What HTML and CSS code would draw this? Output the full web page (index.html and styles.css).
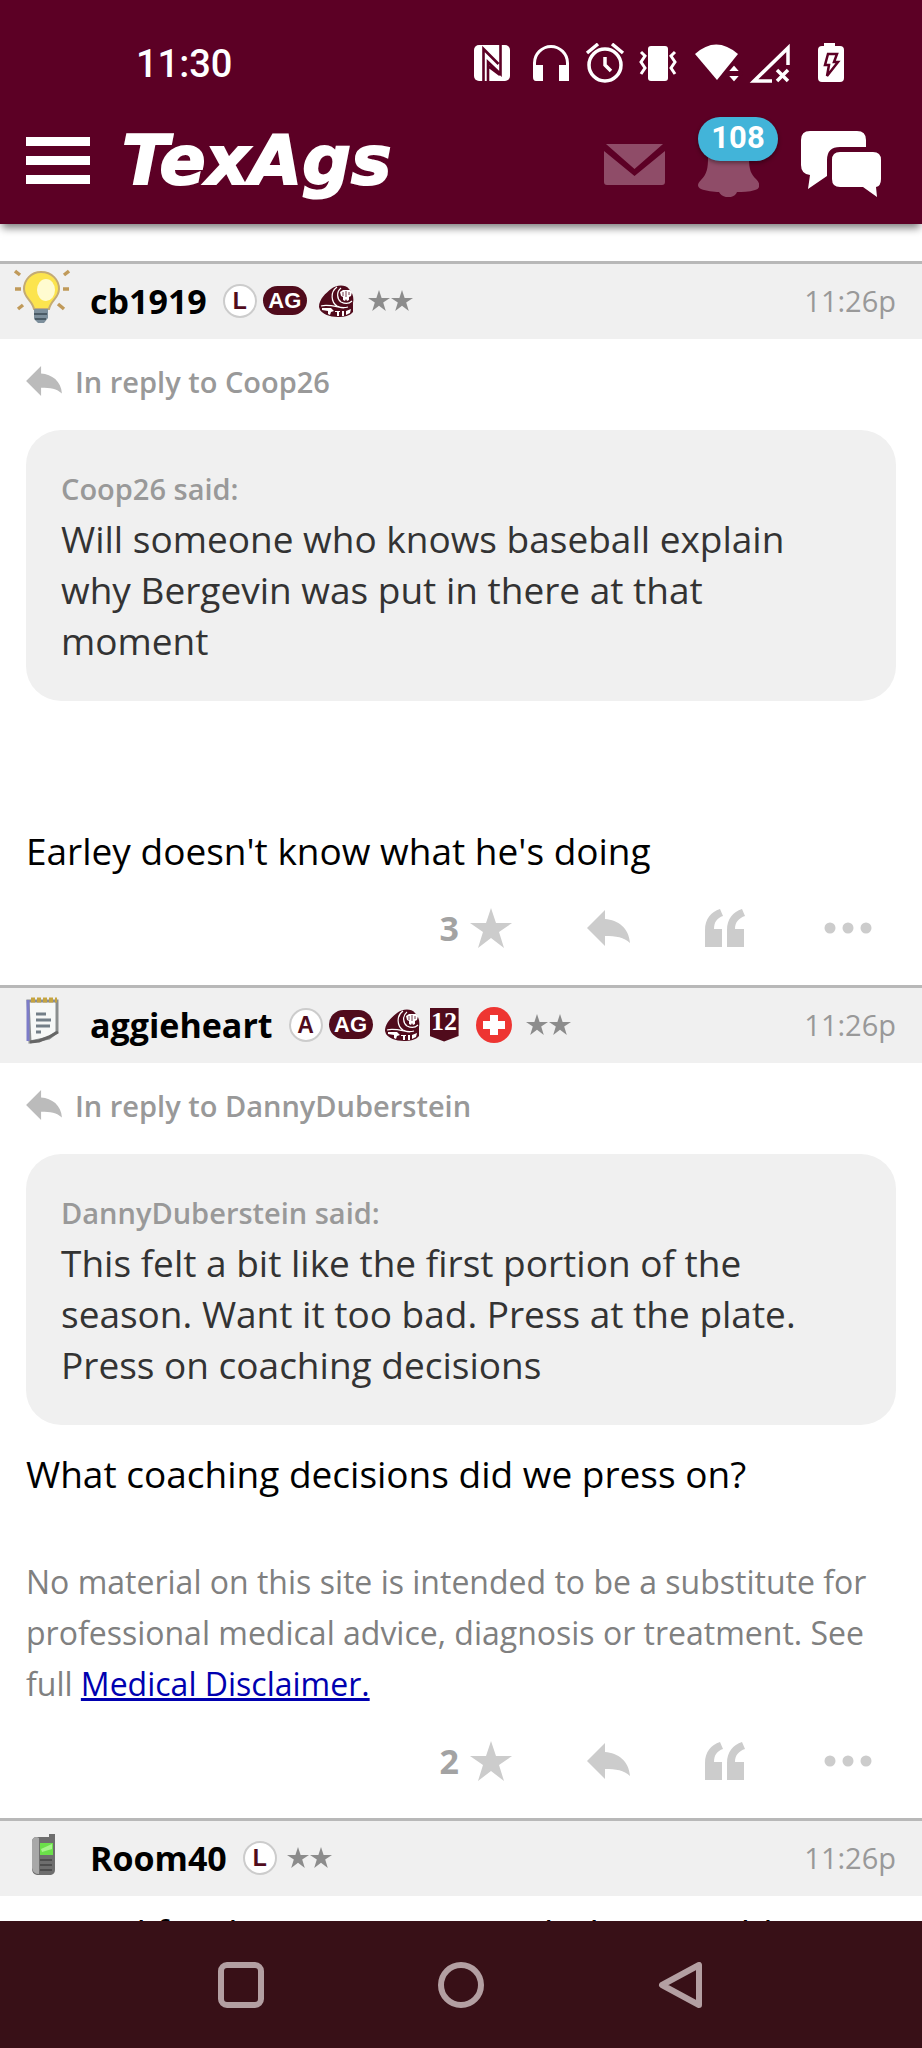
FILE: index.html
```
<!DOCTYPE html>
<html lang="en">
<head>
  <meta charset="UTF-8">
  <title>TexAgs</title>
  <meta name="viewport" content="width=device-width, initial-scale=1.0">
  <link rel="stylesheet" href="styles.css">
</head>
<body>
  <!-- shared icons -->
  <svg class="sprite" aria-hidden="true">
    <symbol id="i-reply" viewBox="0 0 43 36">
      <path d="M0 18L18 0v9c13 1 24 9 25 24-6-6-14-7-25-7v10z"/>
    </symbol>
    <symbol id="i-star" viewBox="0 0 42 40">
      <path d="M21 0l5 15h16L29 24l5 16-13-10L8 40l5-16L0 15h16z"/>
    </symbol>
    <symbol id="i-quote" viewBox="0 0 40 38">
      <path d="M0 38V21C0 10 6 3 15 0l3 7c-6 2-9 6-9 13h8v18zM22 38V21C22 10 28 3 37 0l3 7c-6 2-10 6-10 13h9v18z"/>
    </symbol>
    <symbol id="i-more" viewBox="0 0 48 12">
      <circle cx="6" cy="6" r="5.5"/><circle cx="24" cy="6" r="5.5"/><circle cx="42" cy="6" r="5.5"/>
    </symbol>
    <symbol id="i-ring" viewBox="0 0 36 32">
      <path fill="#500b1c" d="M1 22C1 14 8 8 13 4 18 0 27-1 31 4c4 4 5 9 4 14v9c-3 4-9 5-15 5-9 0-15-3-18-7z"/>
      <path fill="none" stroke="#fff" stroke-width="1.2" d="M19 2c-7 5-6 15 0 19 4 2 8 2 11 1M23 3c-5 4-4 11 0 14 4 2 8 2 11-1M3 21c6-2 12 0 23 2"/>
      <path fill="#fff" d="M22 7l3-2h7l2 2-1 4-2 1v3l-2 1-1-2-1 2-2-1v-3l-2-1zM4 23h9l3 3-3 1-1 3-2-1v-3l-6-1zM17 26h5v1h-1v4h-2v-4h-2zM24 26h2v5h-2zM28 26l5-2-1 4-4 2z"/>
      <path fill="none" stroke="#500b1c" stroke-width=".8" d="M25 7v4M28 6v6M31 7v3"/>
    </symbol>
  </svg>

  <header class="top">
    <div class="status-bar">
      <span class="clock">11:30</span>
      <svg class="status-icons" viewBox="0 0 370 40" fill="#fff">
        <!-- nfc -->
        <rect y="2" width="36" height="36" rx="5"/>
        <path fill="none" stroke="#5c0025" stroke-width="2.6" d="M9.500 38V6l15 15M26.500 2v29L14 19v19M14 23l12 9"/>
        <!-- headphones -->
        <path d="M59 34V20a18 18 0 0 1 36 0v18H85V22h7v-2a15 15 0 0 0-30 0v2h7v16h-7q-3 0-3-4z"/>
        <!-- alarm -->
        <circle cx="131" cy="22" r="16" fill="none" stroke="#fff" stroke-width="3.500"/>
        <path fill="none" stroke="#fff" stroke-width="3.500" d="M131 14v8l6 6M113 10l11-9M149 10l-11-9"/>
        <!-- vibrate -->
        <rect x="174" y="3" width="20" height="35" rx="3"/>
        <path fill="none" stroke="#fff" stroke-width="3" d="M167 9l4 4-4 6 4 6-4 6M201 9l-4 4 4 6-4 6 4 6"/>
        <!-- wifi -->
        <path d="M221 11q21-19 43 0l-21 26z"/>
        <path stroke="#5c0025" stroke-width="2" d="M253 29l7-8 7 8zM253 32h14l-7 8z"/>
        <!-- signal -->
        <path fill="none" stroke="#fff" stroke-width="3.500" d="M298 38h-18L314 5v17M303 27l11 11M314 27l-11 11"/>
        <!-- battery -->
        <path d="M350 0h11v3h5q4 0 4 4v28q0 4-4 4h-18q-4 0-4-4V7q0-4 4-4h2z"/>
        <path fill="none" stroke="#5c0025" stroke-width="2.500" d="M354 11h9l-3 8h4l-11 14 2-11h-4z"/>
      </svg>
    </div>
    <div class="site-bar">
      <button class="menu" aria-label="Menu"><span></span><span></span><span></span></button>
      <a class="logo" href="#">TexAgs</a>
      <nav class="tools">
        <a href="#" aria-label="Messages">
          <svg width="61" height="41" viewBox="0 0 61 41" fill="#8f4c68">
            <path d="M2 0h57L30.500 25zM0 7l30.500 25L61 7v31q0 3-3 3H3q-3 0-3-3z"/>
          </svg>
        </a>
        <a class="alerts" href="#" aria-label="Alerts">
          <svg width="61" height="65" viewBox="0 0 61 65" fill="#8f4c68">
            <path d="M30 4c15 0 21 9 21 22 0 12 2 16 7 21 5 5 4 10-1 11-6 2-13 2-18 2-2 7-15 7-18 0-5 0-13-1-18-3-4-2-4-5 0-9 6-6 7-12 7-22C10 13 16 4 30 4z"/>
          </svg>
          <span class="count">108</span>
        </a>
        <a class="forums" href="#" aria-label="Forums">
          <svg width="80" height="66" viewBox="0 0 80 66" fill="#fff">
            <path d="M9 0h47q9 0 9 9v7H39q-13 0-13 13v16L7 58l2-14Q0 43 0 34V9q0-9 9-9z"/>
            <path d="M39 21h33q8 0 8 8v19q0 7-5 8l1 10-14-10H39q-8 0-8-8V29q0-8 8-8z"/>
          </svg>
        </a>
      </nav>
    </div>
  </header>

  <main class="thread">
    <article class="post">
      <div class="post-head">
        <svg class="avatar" viewBox="0 0 56 56">
          <path stroke="#c09a5a" stroke-width="3.500" d="M1 2l5 4M55 2l-5 4M1 20h6M55 20h-6M4 40l5-4M50 40l-6-5" fill="none"/>
          <path fill="#fce44e" stroke="#c4ab74" stroke-width="2" d="M27 3c11 0 18 8 18 17 0 9-8 11-10 20H20c-2-9-10-11-10-20C10 11 17 3 27 3z"/>
          <ellipse cx="32" cy="21" rx="9" ry="11" fill="#fffbd0"/>
          <path fill="#7d8f9c" d="M20 40h14v9l-4 5h-6l-4-4z"/>
          <path stroke="#4b5b66" stroke-width="2" d="M20 45h13M21 50h11"/>
        </svg>
        <a class="user" href="#">cb1919</a>
        <span class="badge tier">L</span>
        <span class="badge ag">AG</span>
        <svg class="ring"><use href="#i-ring"/></svg>
        <span class="stars"><svg><use href="#i-star"/></svg><svg><use href="#i-star"/></svg></span>
        <time>11:26p</time>
      </div>
      <div class="post-body">
        <a class="reply-to" href="#"><svg><use href="#i-reply"/></svg>In reply to Coop26</a>
        <blockquote>
          <cite>Coop26 said:</cite>
          <p>Will someone who knows baseball explain why Bergevin was put in there at that moment</p>
        </blockquote>
        <p class="text spaced">Earley doesn't know what he's doing</p>
      </div>
      <div class="actions">
        <button class="vote" aria-label="Star"><span>3</span><svg width="42" height="40"><use href="#i-star"/></svg></button>
        <button aria-label="Reply"><svg width="43" height="36"><use href="#i-reply"/></svg></button>
        <button aria-label="Quote"><svg width="40" height="38"><use href="#i-quote"/></svg></button>
        <button class="more" aria-label="More"><svg width="48" height="12"><use href="#i-more"/></svg></button>
      </div>
    </article>

    <article class="post">
      <div class="post-head">
        <svg class="avatar" viewBox="-5 -3 56 56">
          <path fill="#f6f8f7" stroke="#8b8f8f" stroke-width="3" d="M9 5h29v31l-8 6-19 4z"/>
          <path fill="none" stroke="#7d7cc8" stroke-width="3" d="M9 4v41"/>
          <path fill="none" stroke="#666" stroke-width="3" d="M11 46l9-1 10-4 9-5"/>
          <path fill="none" stroke="#c5a440" stroke-width="5" stroke-dasharray="4 2" d="M12 4h26"/>
          <path fill="none" stroke="#737f88" stroke-width="3" d="M17 18h10M17 24h15M17 30h14M17 36h5"/>
        </svg>
        <a class="user" href="#">aggieheart</a>
        <span class="badge tier">A</span>
        <span class="badge ag">AG</span>
        <svg class="ring"><use href="#i-ring"/></svg>
        <span class="badge shield">12</span>
        <svg class="medic" viewBox="0 0 36 36"><circle cx="18" cy="18" r="18" fill="#ee3532"/><path fill="#fff" d="M14 8h8v6h7v8h-7v6h-8v-6H7v-8h7z"/></svg>
        <span class="stars"><svg><use href="#i-star"/></svg><svg><use href="#i-star"/></svg></span>
        <time>11:26p</time>
      </div>
      <div class="post-body">
        <a class="reply-to" href="#"><svg><use href="#i-reply"/></svg>In reply to DannyDuberstein</a>
        <blockquote>
          <cite>DannyDuberstein said:</cite>
          <p>This felt a bit like the first portion of the season. Want it too bad. Press at the plate. Press on coaching decisions</p>
        </blockquote>
        <p class="text">What coaching decisions did we press on?</p>
        <p class="signature">No material on this site is intended to be a substitute for professional medical advice, diagnosis or treatment. See full <a href="#">Medical Disclaimer.</a></p>
      </div>
      <div class="actions">
        <button class="vote" aria-label="Star"><span>2</span><svg width="42" height="40"><use href="#i-star"/></svg></button>
        <button aria-label="Reply"><svg width="43" height="36"><use href="#i-reply"/></svg></button>
        <button aria-label="Quote"><svg width="40" height="38"><use href="#i-quote"/></svg></button>
        <button class="more" aria-label="More"><svg width="48" height="12"><use href="#i-more"/></svg></button>
      </div>
    </article>

    <article class="post">
      <div class="post-head">
        <svg class="avatar" viewBox="0 -8 56 56">
          <path fill="#6e6e6e" d="M35 0h6v36q0 4-4 5H23q-5-1-5-6V8q0-5 5-5h12z"/>
          <path fill="#a8a8a8" d="M18 34V8q0-5 5-5l2 1v36q-6 0-7-6z"/>
          <rect x="26" y="9" width="13" height="12" fill="#6be04a"/>
          <path fill="#a5f58a" d="M27 15l11-5v5l-10 3z"/>
          <path stroke="#4e4e4e" stroke-width="2" d="M26 26h12M26 31h12M26 36h12"/>
        </svg>
        <a class="user" href="#">Room40</a>
        <span class="badge tier">L</span>
        <span class="stars"><svg><use href="#i-star"/></svg><svg><use href="#i-star"/></svg></span>
        <time>11:26p</time>
      </div>
      <div class="post-body plain">
        <p class="text">A need for their coming in, with their would</p>
      </div>
    </article>
  </main>

  <nav class="system-nav">
    <button aria-label="Recents"><svg viewBox="0 0 46 46"><rect x="3" y="3" width="40" height="40" rx="6"/></svg></button>
    <button aria-label="Home"><svg viewBox="0 0 46 46"><circle cx="23" cy="23" r="20"/></svg></button>
    <button aria-label="Back"><svg viewBox="0 0 46 46"><path d="M4 23L41 3v40z"/></svg></button>
  </nav>
</body>
</html>
```
FILE: styles.css
```
* { box-sizing: border-box; }
body {
  margin: 0; height: 100vh; display: flex; flex-direction: column;
  background: #fff; color: #000; overflow: hidden;
  font-family: "Open Sans", "Noto Sans", sans-serif; font-size: 37px;
}
p { margin: 0; }
a { color: inherit; text-decoration: none; }
button { background: none; border: 0; padding: 0; font: inherit; color: inherit; cursor: pointer; }
svg { display: block; flex: none; }
.sprite { display: none; }

/* header */
.top { background: #5c0025; color: #fff; padding-bottom: 23px; box-shadow: 0 6px 8px -2px rgba(0,0,0,0.5); flex: none; position: relative; }
.status-bar { display: flex; justify-content: space-between; align-items: center; padding: 42px 78px 0 136px; }
.clock { font: 500 38px/40px Roboto, sans-serif; padding-top: 2px; }
.status-icons { width: 370px; height: 40px; }
.site-bar { display: flex; align-items: center; padding: 35px 41px 0 26px; }
.menu { width: 64px; display: flex; flex-direction: column; gap: 10px; }
.menu span { height: 9px; background: #fff; }
.logo { font: italic bold 68px/80px "DejaVu Sans", sans-serif; margin-left: 32px; padding-top: 2px; -webkit-text-stroke: 2px #fff; }
.tools { margin: 8px 0 0 auto; display: flex; align-items: center; gap: 33px; }
.alerts { position: relative; }
.forums { margin-left: -10px; padding-left: 19px; }
.count {
  position: absolute; top: -15px; left: 0; width: 80px; height: 44px; border-radius: 22px;
  background: #42b4d9; font: bold 31px/42px Roboto, sans-serif; text-align: center;
  box-shadow: 0 2px 4px rgba(0,0,0,0.4);
}

/* posts */
.thread { flex: 1; overflow: hidden; padding-top: 37px; }
.post-head {
  display: flex; align-items: center; height: 78px; padding: 0 26px 2px 14px;
  background: #f0f0f0; border-top: 3px solid #b8b8b8;
}
.avatar { width: 56px; height: 56px; margin-right: 20px; align-self: flex-start; margin-top: 5px; }
.user { font-weight: bold; font-size: 34px; margin-right: 16px; }
.badge { font-family: "Liberation Sans", Arial, sans-serif; font-weight: bold; text-align: center; color: #fff; background: #500b1c; }
.tier { width: 34px; height: 34px; border: 2px solid #ccc; border-radius: 50%; background: #fff; color: #500b1c; font-size: 23px; line-height: 30px; }
.ag { width: 44px; height: 29px; border-radius: 15px; margin-left: 6px; font-size: 22px; line-height: 29px; }
.ring { width: 36px; height: 32px; margin: 0 4px 0 11px; }
.shield { width: 29px; height: 34px; margin-left: 6px; font: bold 26px/28px "Liberation Serif", serif; clip-path: polygon(0 0, 100% 0, 100% 84%, 50% 100%, 0 84%); }
.medic { width: 36px; height: 36px; margin: 0 4px 0 17px; }
.stars { display: flex; gap: 1px; margin-left: 10px; fill: #8c8c8c; }
.stars svg { width: 22px; height: 21px; }
time { margin-left: auto; color: #999; font-size: 29px; }

.post-body { padding: 19px 26px 0; }
.plain { padding-top: 11px; }
.reply-to { display: flex; align-items: center; gap: 13px; height: 46px; color: #999; font-weight: 600; font-size: 29px; }
.reply-to svg { width: 36px; height: 30px; fill: #bbb; }
blockquote { margin: 26px 0 23px; padding: 35px 48px 35px 35px; border-radius: 35px; background: #f0f0f0; color: #333; line-height: 51px; }
cite { display: block; font-style: normal; font-weight: 600; font-size: 29px; line-height: 48px; color: #999; }
.text { line-height: 51px; }
.spaced { margin-top: 124px; }
.signature { margin-top: 57px; font-size: 32px; line-height: 51px; color: #808080; }
.signature a { color: #0000b0; text-decoration: underline; }

.actions { display: flex; justify-content: flex-end; align-items: center; gap: 75px; padding: 32px 50px 37px; fill: #ccc; }
.more { margin-left: 4px; }
.vote { display: flex; align-items: center; gap: 11px; font-weight: bold; font-size: 34px; line-height: 40px; color: #a3a3a3; }

/* android bar */
.system-nav { flex: none; height: 127px; background: #381017; display: flex; justify-content: center; gap: 174px; align-items: center; }
.system-nav svg { width: 46px; height: 46px; fill: none; stroke: #b39fa2; stroke-width: 6; stroke-linejoin: round; }
```
